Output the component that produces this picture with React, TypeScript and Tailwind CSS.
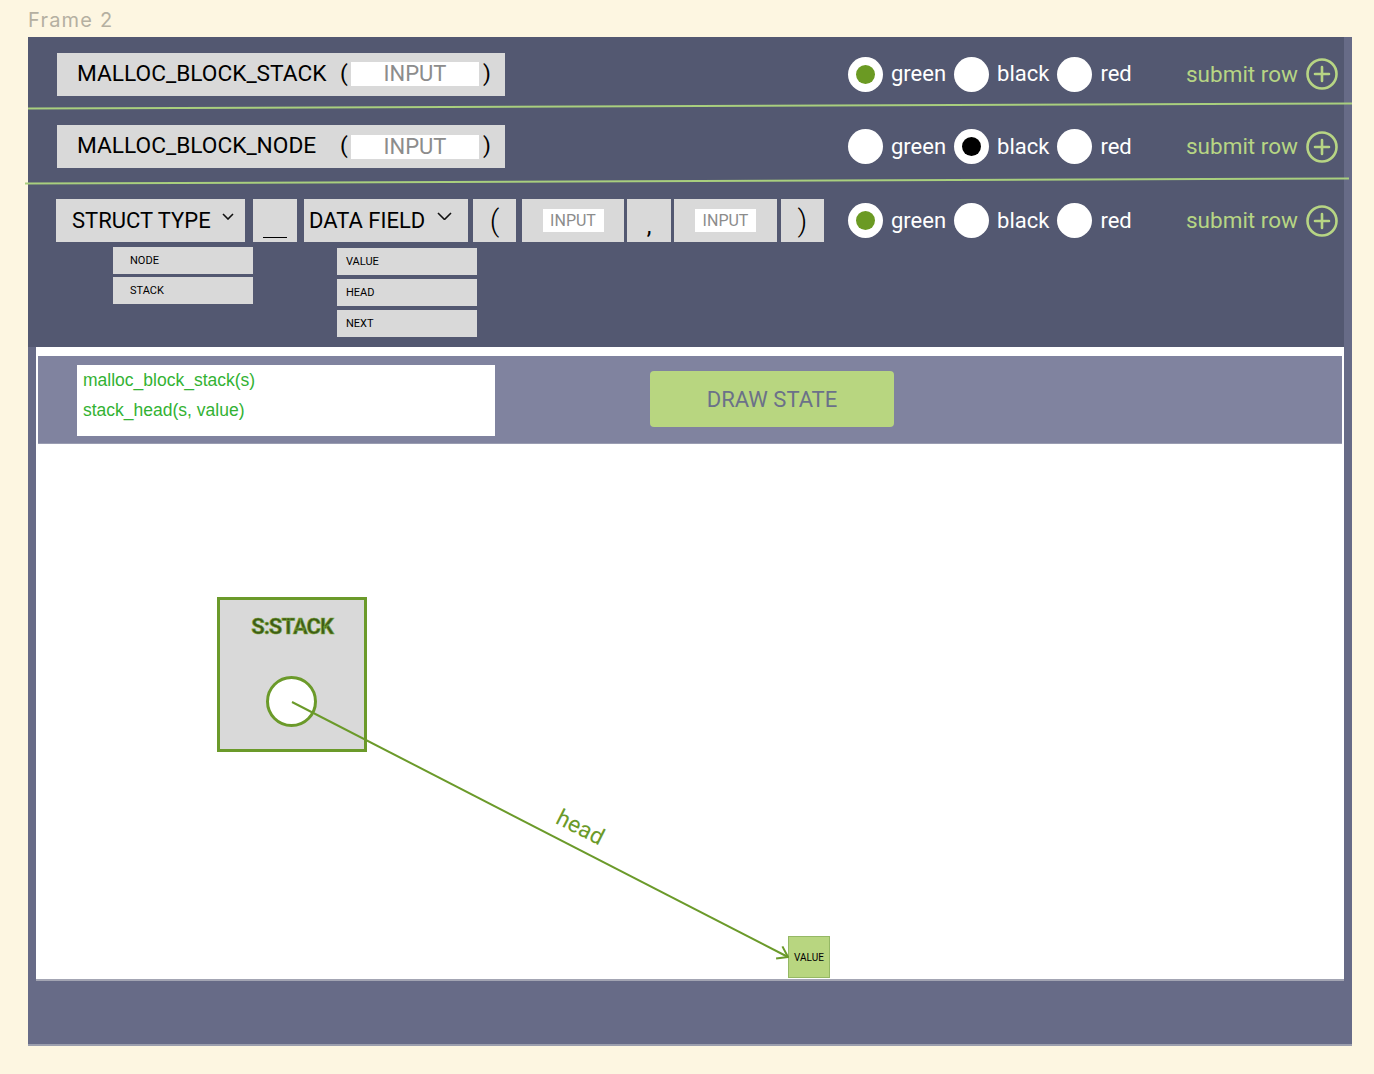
import React from "react";

type Pick = "green" | "black";

const Radio = ({ label, dot }: { label: string; dot?: Pick }) => (
  <div className="flex items-center">
    <span className="flex h-[35px] w-[35px] shrink-0 items-center justify-center rounded-full bg-white">
      {dot === "green" && <span className="h-[19px] w-[19px] rounded-full bg-[#6b9a23]" />}
      {dot === "black" && <span className="h-[19px] w-[19px] rounded-full bg-black" />}
    </span>
    <span className="ml-[8px] text-[22px] leading-none text-white">{label}</span>
  </div>
);

const PlusCircle = () => (
  <svg width="32" height="32" viewBox="0 0 32 32" fill="none" stroke="#b7d584" strokeWidth="2.6" strokeLinecap="round">
    <circle cx="16" cy="16" r="14.5" />
    <path d="M16 9v14M9 16h14" />
  </svg>
);

const Chevron = ({ w }: { w: number }) => (
  <svg width={w} height={w / 2 + 1} viewBox={`0 0 ${w} ${w / 2 + 1}`} fill="none" stroke="#111" strokeWidth="1.6">
    <polyline points={`1,1 ${w / 2},${w / 2} ${w - 1},1`} />
  </svg>
);

const RowControls = ({ checked }: { checked: Pick }) => (
  <>
    <div className="flex w-[338px] items-center gap-[8px]">
      <Radio label="green" dot={checked === "green" ? "green" : undefined} />
      <Radio label="black" dot={checked === "black" ? "black" : undefined} />
      <Radio label="red" />
    </div>
    <div className="flex items-center">
      <span className="text-[22.5px] leading-none text-[#b7d584]">submit row</span>
      <span className="ml-[8px] flex">
        <PlusCircle />
      </span>
    </div>
  </>
);

const CallBox = ({ name }: { name: string }) => (
  <div className="flex h-[43px] w-[448px] items-center bg-[#d9d9d9] pl-[20px] text-[22.7px] leading-none text-black">
    <span className="w-[263px]">{name}</span>
    <span className="w-[8px]">(</span>
    <span className="ml-[3px] flex h-[24px] w-[128px] items-center justify-center bg-white text-[22px] text-[#8c8c8c]">
      INPUT
    </span>
    <span className="ml-[4px]">)</span>
  </div>
);

const Cell = ({ w, className, children }: { w: string; className?: string; children?: React.ReactNode }) => (
  <div className={`flex h-[43px] shrink-0 items-center bg-[#d9d9d9] text-black ${w} ${className ?? ""}`}>{children}</div>
);

const Item = ({ label, pad }: { label: string; pad: string }) => (
  <div className={`flex h-[27px] w-[140px] items-center bg-[#d9d9d9] pt-[1px] text-[11px] text-black ${pad}`}>{label}</div>
);

export default function App() {
  return (
    <div className="h-[1074px] w-[1374px] overflow-hidden bg-[#fdf6e1] font-['Roboto',sans-serif]">
      <div className="pl-[28px] pt-[8px] font-['Inter',sans-serif] text-[20px] leading-[24px] tracking-[1.2px] text-[#b5b0a1]">
        Frame 2
      </div>

      <div className="ml-[28px] mt-[5px] h-[1009px] w-[1324px] border-b-2 border-[#9c9fae] bg-[#676b87]">
        {/* builder rows */}
        <div className="flex h-[310px] w-[1316px] flex-col bg-[#535871] pt-[15px]">
          <div className="flex h-[44px] items-center pl-[29px]">
            <div className="w-[791px] shrink-0">
              <CallBox name="MALLOC_BLOCK_STACK" />
            </div>
            <RowControls checked="green" />
          </div>

          <div className="mt-[9px] h-[2px] w-[1324px] -rotate-[0.22deg] bg-[#a9cf7e]" />

          <div className="mt-[18px] flex h-[43px] items-center pl-[29px]">
            <div className="w-[791px] shrink-0">
              <CallBox name="MALLOC_BLOCK_NODE" />
            </div>
            <RowControls checked="black" />
          </div>

          <div className="-ml-[3px] mt-[12px] h-[2px] w-[1324px] -rotate-[0.22deg] bg-[#a9cf7e]" />

          <div className="mt-[17px] flex h-[43px] items-center pl-[28px]">
            <div className="flex w-[792px] shrink-0 items-center">
              <Cell w="w-[189px]" className="pl-[16px] text-[22px]">
                <span className="leading-none">STRUCT TYPE</span>
                <span className="-mt-[9px] ml-[11px] flex">
                  <Chevron w={12} />
                </span>
              </Cell>
              <Cell w="w-[44px]" className="ml-[8px] items-end justify-center pb-[4px]">
                <span className="h-[1px] w-[24px] bg-black" />
              </Cell>
              <Cell w="w-[164px]" className="ml-[7px] pl-[5px] text-[22px]">
                <span className="leading-none">DATA FIELD</span>
                <span className="-mt-[9px] ml-[12px] flex">
                  <Chevron w={15} />
                </span>
              </Cell>
              <Cell w="w-[43px]" className="ml-[5px] justify-center text-[30px] font-light">
                <span className="leading-none">(</span>
              </Cell>
              <Cell w="w-[102px]" className="ml-[6px] justify-center">
                <span className="flex h-[23px] w-[61px] items-center justify-center bg-white text-[16px] text-[#8c8c8c]">
                  INPUT
                </span>
              </Cell>
              <Cell w="w-[44px]" className="ml-[3px] justify-center pt-[10px] text-[24px]">
                <span className="leading-none">,</span>
              </Cell>
              <Cell w="w-[103px]" className="ml-[3px] justify-center">
                <span className="flex h-[23px] w-[61px] items-center justify-center bg-white text-[16px] text-[#8c8c8c]">
                  INPUT
                </span>
              </Cell>
              <Cell w="w-[43px]" className="ml-[4px] justify-center text-[30px] font-light">
                <span className="leading-none">)</span>
              </Cell>
            </div>
            <RowControls checked="green" />
          </div>

          <div className="mt-[5px] flex items-start pl-[85px]">
            <div className="flex flex-col gap-[3px]">
              <Item label="NODE" pad="pl-[17px]" />
              <Item label="STACK" pad="pl-[17px]" />
            </div>
            <div className="ml-[84px] mt-[1px] flex flex-col gap-[4px]">
              <Item label="VALUE" pad="pl-[9px]" />
              <Item label="HEAD" pad="pl-[9px]" />
              <Item label="NEXT" pad="pl-[9px]" />
            </div>
          </div>
        </div>

        {/* state panel */}
        <div className="ml-[8px] h-[634px] w-[1308px] border-b-2 border-[#a3a5b3] bg-white pt-[9px]">
          <div className="ml-[2px] flex h-[88px] w-[1304px] items-start border-b border-[#9a9db2] bg-[#80839f]">
            <div className="ml-[39px] mt-[9px] h-[71px] w-[418px] bg-white pl-[6px] font-['Liberation_Sans',Arial,sans-serif] text-[17.5px] leading-[30px] text-[#33b233]">
              <div>malloc_block_stack(s)</div>
              <div>stack_head(s, value)</div>
            </div>
            <button className="ml-[155px] mt-[15px] flex h-[56px] w-[244px] items-center justify-center rounded-[4px] bg-[#b8d680] text-[22px] text-[#6b7189]">
              DRAW STATE
            </button>
          </div>

          <div className="relative h-[535px]">
            <div className="absolute left-[181px] top-[153px] h-[155px] w-[150px] border-[3px] border-[#6b9a2a] bg-[#d9d9d9]">
              <div className="pt-[14px] text-center text-[22px] font-bold leading-[26px] tracking-[-1px] text-[#3f5c17] [-webkit-text-stroke:0.6px_#7aa83a]">
                S:STACK
              </div>
            </div>
            <div className="absolute left-[230px] top-[232px] h-[51px] w-[51px] rounded-full border-[3px] border-[#6b9a2a] bg-white" />
            <div className="absolute left-[752px] top-[492px] flex h-[42px] w-[42px] items-center justify-center border border-[#95b865] bg-[#b8d680] text-[10px] text-black">
              VALUE
            </div>
            <svg className="absolute left-0 top-0" width="1308" height="535" fill="none" stroke="#6b9a2a" strokeWidth="2">
              <line x1="256" y1="258" x2="752" y2="513" />
              <polyline points="746.4,502.4 752,513 740.1,514.6" strokeLinejoin="round" />
            </svg>
            <div className="absolute left-[518px] top-[370px] h-[28px] w-[52px] rotate-[27deg] text-center text-[23px] leading-[28px] text-[#6b9a2a]">
              head
            </div>
          </div>
        </div>
      </div>
    </div>
  );
}
